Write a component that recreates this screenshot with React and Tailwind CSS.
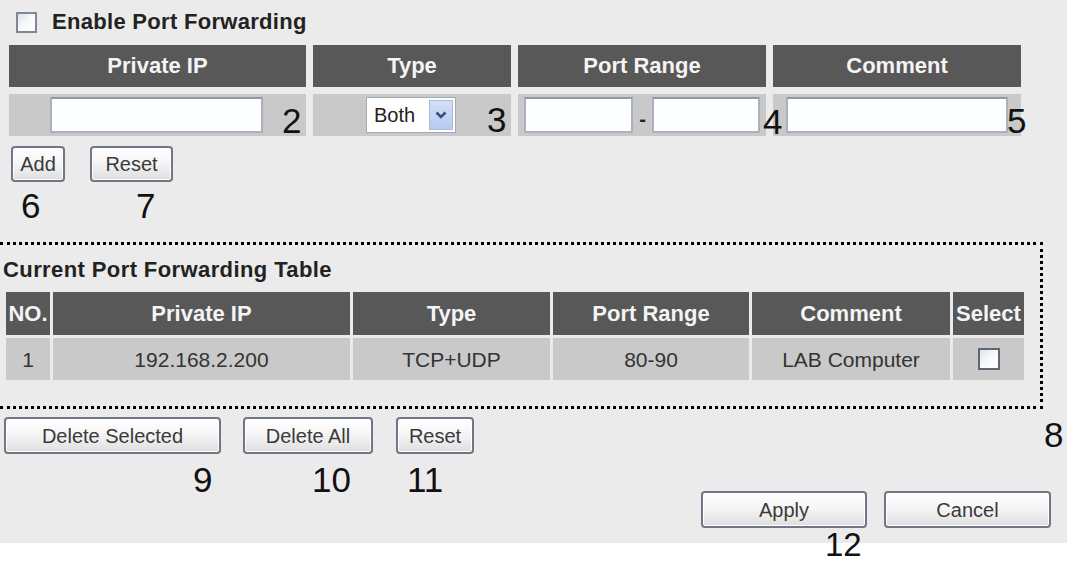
import React from "react";

const Num = ({ className, children }) => (
  <span className={`absolute text-[35px] leading-none text-[#111] ${className}`}>{children}</span>
);

const Btn = ({ className, children }) => (
  <button
    className={`rounded-[4px] border-2 border-[#6f7784] bg-linear-to-b from-[#ffffff] via-[#f4f4f4] to-[#dedede] text-[20px] leading-none text-[#3a3a3a] shadow-[inset_0_0_0_1px_#ffffff] ${className}`}
  >
    {children}
  </button>
);

const Field = ({ className }) => (
  <div className={`h-[36px] border-2 border-[#aab1bc] border-t-[#9098a4] bg-[#fdfeff] ${className}`} />
);

const Head = ({ children, className = "" }) => (
  <div className={`flex items-center justify-center bg-[#585858] text-[22px] font-bold leading-none text-[#f4f4f4] overflow-hidden whitespace-nowrap ${className}`}>
    {children}
  </div>
);

const Cell = ({ children, className = "" }) => (
  <div className={`flex items-center justify-center bg-[#c9c9c9] text-[21px] leading-none text-[#333] ${className}`}>
    {children}
  </div>
);

const CheckBox = ({ className }) => (
  <span
    className={`block border-2 border-[#5d6773] bg-linear-to-br from-[#dfe3e8] via-[#f8f9fb] to-[#ffffff] ${className}`}
  />
);

export default function App() {
  return (
    <div className="relative h-[564px] w-[1067px] overflow-hidden bg-white font-['Liberation_Sans',Arial,sans-serif]">
      <div className="h-[543px] bg-[#ebebeb] pt-[11px]">
        {/* Enable row */}
        <div className="flex h-[22px] items-center pl-[16px]">
          <CheckBox className="h-[21px] w-[21px] border-[#7f8894]" />
          <span className="ml-[15px] text-[22px] font-bold leading-none tracking-[0.3px] text-[#222]">Enable Port Forwarding</span>
        </div>

        {/* Entry form */}
        <div className="ml-[9px] mt-[12px] grid grid-cols-[297px_198px_248px_248px] gap-x-[7px] gap-y-[7px]">
          <Head className="h-[42px]">Private IP</Head>
          <Head className="h-[42px]">Type</Head>
          <Head className="h-[42px]">Port Range</Head>
          <Head className="h-[42px]">Comment</Head>

          <div className="flex h-[42px] items-center bg-[#c9c9c9] pl-[41px]">
            <Field className="w-[213px]" />
          </div>
          <div className="flex h-[42px] items-center bg-[#c9c9c9] pl-[53px]">
            <div className="flex h-[36px] w-[90px] items-stretch border border-[#a3abb7] bg-white">
              <span className="flex flex-1 items-center pl-[7px] text-[20px] leading-none text-[#222]">Both</span>
              <span className="m-[2px] flex w-[24px] items-center justify-center border border-[#a8bce0] bg-linear-to-b from-[#d3e0f7] to-[#b7cbf0]">
                <svg width="12" height="8" viewBox="0 0 12 8">
                  <path d="M1.5 1.5 L6 6 L10.5 1.5" fill="none" stroke="#2f4f86" strokeWidth="2.6" />
                </svg>
              </span>
            </div>
          </div>
          <div className="flex h-[42px] items-center bg-[#c9c9c9] pl-[6px]">
            <Field className="w-[109px]" />
            <span className="flex w-[19px] justify-center pt-[8px] text-[20px] font-bold leading-none text-[#222]">-</span>
            <Field className="w-[108px]" />
          </div>
          <div className="flex h-[42px] items-center bg-[#c9c9c9] pl-[13px]">
            <Field className="w-[222px]" />
          </div>
        </div>

        {/* Add / Reset */}
        <div className="mt-[10px] flex">
          <Btn className="ml-[11px] h-[36px] w-[54px]">Add</Btn>
          <Btn className="ml-[25px] h-[36px] w-[83px]">Reset</Btn>
        </div>

        {/* Current table */}
        <div className="mt-[60px] w-[1043px] border-b-[3px] border-r-[3px] border-t-[3px] border-dotted border-black pb-[26px] pt-[14px]">
          <div className="pl-[3px] text-[22px] font-bold leading-none tracking-[0.4px] text-[#222]">Current Port Forwarding Table</div>
          <div className="ml-[6px] mt-[11px] grid grid-cols-[44px_297px_197px_196px_198px_71px] gap-[3px]">
            <Head className="h-[43px]">NO.</Head>
            <Head className="h-[43px]">Private IP</Head>
            <Head className="h-[43px]">Type</Head>
            <Head className="h-[43px]">Port Range</Head>
            <Head className="h-[43px]">Comment</Head>
            <Head className="h-[43px]">Select</Head>

            <Cell className="h-[42px]">1</Cell>
            <Cell className="h-[42px]">192.168.2.200</Cell>
            <Cell className="h-[42px]">TCP+UDP</Cell>
            <Cell className="h-[42px]">80-90</Cell>
            <Cell className="h-[42px]">LAB Computer</Cell>
            <Cell className="h-[42px]">
              <CheckBox className="h-[22px] w-[22px]" />
            </Cell>
          </div>
        </div>

        {/* Delete buttons */}
        <div className="mt-[8px] flex">
          <Btn className="ml-[4px] h-[37px] w-[217px]">Delete Selected</Btn>
          <Btn className="ml-[22px] h-[37px] w-[130px]">Delete All</Btn>
          <Btn className="ml-[23px] h-[37px] w-[78px]">Reset</Btn>
        </div>

        {/* Apply / Cancel */}
        <div className="mt-[37px] flex">
          <Btn className="ml-[701px] h-[37px] w-[166px]">Apply</Btn>
          <Btn className="ml-[17px] h-[37px] w-[167px]">Cancel</Btn>
        </div>
      </div>

      {/* Annotation numbers */}
      <Num className="left-[282px] top-[103px]">2</Num>
      <Num className="left-[487px] top-[102px]">3</Num>
      <Num className="left-[763px] top-[104px]">4</Num>
      <Num className="left-[1007px] top-[103px]">5</Num>
      <Num className="left-[21px] top-[188px]">6</Num>
      <Num className="left-[136px] top-[188px]">7</Num>
      <Num className="left-[1044px] top-[417px]">8</Num>
      <Num className="left-[193px] top-[462px]">9</Num>
      <Num className="left-[312px] top-[462px]">10</Num>
      <Num className="left-[407px] top-[462px]">11</Num>
      <span className="absolute left-[825px] top-[528px] text-[33px] leading-none text-[#111]">12</span>
    </div>
  );
}
